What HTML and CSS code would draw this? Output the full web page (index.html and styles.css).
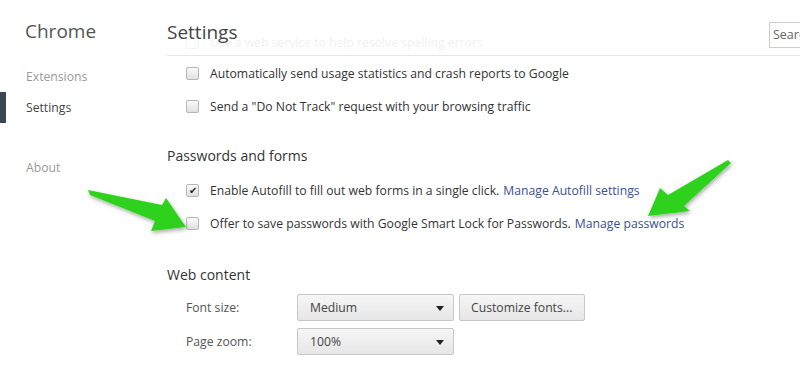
FILE: index.html
```html
<!DOCTYPE html>
<html lang="en">
<head>
    <meta charset="UTF-8">
    <title>Settings</title>
    <link rel="stylesheet" href="styles.css">
</head>
<body>
<div class="sidebar">
    <h1 class="brand">Chrome</h1>
    <a class="nav" href="#">Extensions</a>
    <a class="nav active" href="#">Settings</a>
    <a class="nav about" href="#">About</a>
</div>
<div class="main">
    <div class="header">
        <h1 class="title">Settings</h1>
        <div class="ghost"><span class="box"></span>Use a web service to help resolve spelling errors</div>
        <input class="search" type="text" placeholder="Search settings">
    </div>

    <div class="row first"><span class="box"></span>Automatically send usage statistics and crash reports to Google</div>
    <div class="row"><span class="box"></span>Send a "Do Not Track" request with your browsing traffic</div>

    <h3 class="section">Passwords and forms</h3>
    <div class="row"><span class="box checked">&#10004;</span>Enable Autofill to fill out web forms in a single click. <a class="link" href="#">Manage Autofill settings</a></div>
    <div class="row"><span class="box"></span>Offer to save passwords with Google Smart Lock for Passwords. <a class="link" href="#">Manage passwords</a></div>

    <h3 class="section web">Web content</h3>
    <div class="field">
        <span class="label">Font size:</span>
        <div class="select">Medium<span class="caret"></span></div>
        <div class="button">Customize fonts...</div>
    </div>
    <div class="field">
        <span class="label">Page zoom:</span>
        <div class="select">100%<span class="caret"></span></div>
    </div>
</div>

<svg class="arrows" width="800" height="376" viewBox="0 0 800 376">
    <defs>
        <filter id="soft" x="-20%" y="-20%" width="140%" height="140%">
            <feGaussianBlur in="SourceAlpha" stdDeviation="2"/>
            <feOffset dx="1" dy="2"/>
            <feComponentTransfer><feFuncA type="linear" slope="0.35"/></feComponentTransfer>
            <feMerge><feMergeNode/><feMergeNode in="SourceGraphic"/></feMerge>
        </filter>
    </defs>
    <polygon filter="url(#soft)" fill="#2fd21f" points="88,190 162,205 166,198 186,227 151,231 155,221 90,195"/>
    <polygon filter="url(#soft)" fill="#2fd21f" points="731,163 684,206 690,211 648,216 660,188 668,195 728,160"/>
</svg>
</body>
</html>
```
FILE: styles.css
```css
body {
    margin: 0;
    padding: 0;
    background-color: #fff;
    font-family: "Open Sans", "Noto Sans", Arial, sans-serif;
    font-size: 12.2px;
    color: #333;
    display: flex;
    height: 376px;
    overflow: hidden;
}
.sidebar {
    width: 167px;
    flex: none;
    display: flex;
    flex-direction: column;
}
.brand {
    font-size: 19px;
    font-weight: normal;
    color: #555;
    margin: 17px 0 0 25px;
    height: 28px;
    line-height: 28px;
}
.nav {
    display: block;
    color: #999;
    text-decoration: none;
    height: 31px;
    line-height: 31px;
    padding-left: 26px;
}
.brand + .nav {
    margin-top: 16px;
}
.nav.active {
    color: #444;
    border-left: 6px solid #3c4650;
    padding-left: 20px;
}
.nav.about {
    margin-top: 29px;
}
.main {
    flex: 1;
    min-width: 0;
}
.header {
    position: relative;
    height: 55px;
    border-bottom: 1px solid #e6e6e6;
    display: flex;
    align-items: center;
    justify-content: space-between;
}
.title {
    font-size: 19px;
    font-weight: normal;
    color: #444;
    margin: 8px 0 0 0;
    position: relative;
    z-index: 1;
}
.ghost {
    position: absolute;
    left: 19px;
    top: 34px;
    color: #f1f1f1;
    display: flex;
    align-items: center;
}
.ghost .box {
    border-color: #f4f4f4;
    background: #fff;
}
.search {
    width: 60px;
    height: 26px;
    margin: 14px -29px 0 0;
    border: 1px solid #ccc;
    padding: 0 3px;
    font-family: inherit;
    font-size: 12.5px;
    color: #555;
    box-sizing: border-box;
}
.search::placeholder {
    color: #666;
}
.row {
    display: flex;
    align-items: center;
    height: 33px;
    padding-left: 19px;
}
.row.first {
    margin-top: 1px;
}
.box {
    width: 13px;
    height: 13px;
    box-sizing: border-box;
    border: 1px solid #b5b5b5;
    border-radius: 2px;
    background: linear-gradient(#fafafa, #e0e0e0);
    margin-right: 11px;
    flex: none;
    font-size: 10px;
    line-height: 11px;
    text-align: center;
    color: #222;
}
.link {
    color: #3b4f8f;
    text-decoration: none;
    margin-left: 4px;
}
.section {
    font-size: 14px;
    font-weight: normal;
    color: #333;
    margin: 0;
    height: 28px;
    line-height: 28px;
    margin-top: 19px;
    margin-bottom: 4px;
}
.section.web {
    margin-top: 21px;
    margin-bottom: 1px;
}
.field {
    display: flex;
    align-items: center;
    height: 34px;
    padding-left: 19px;
}
.label {
    width: 111px;
    color: #555;
}
.select,
.button {
    height: 27px;
    box-sizing: border-box;
    border: 1px solid #c6c6c6;
    border-radius: 2px;
    background: linear-gradient(#f6f6f6, #e6e6e6);
    display: flex;
    align-items: center;
    color: #444;
}
.select {
    width: 157px;
    padding: 0 12px;
    position: relative;
}
.caret {
    position: absolute;
    right: 9px;
    top: 11px;
    border-left: 4px solid transparent;
    border-right: 4px solid transparent;
    border-top: 5px solid #222;
}
.button {
    margin-left: 5px;
    padding: 0 11px;
    width: 126px;
}
.arrows {
    position: absolute;
    left: 0;
    top: 0;
    pointer-events: none;
}
```
